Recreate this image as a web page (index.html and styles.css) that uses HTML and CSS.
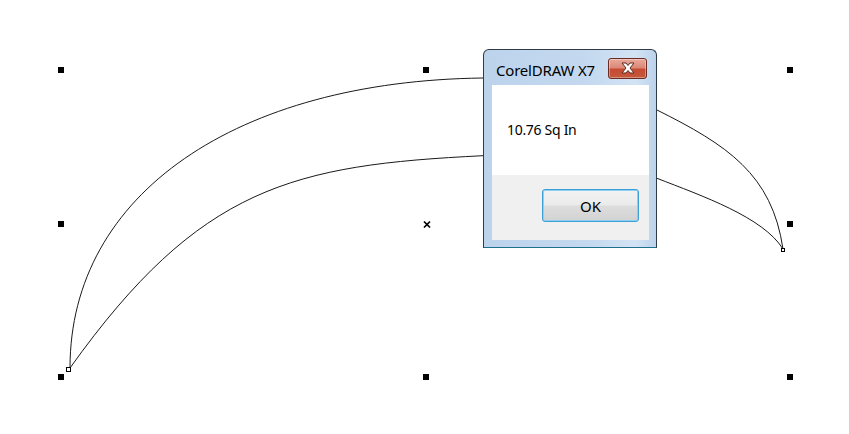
FILE: index.html
```html
<!DOCTYPE html>
<html>
<head>
<meta charset="utf-8">
<link rel="stylesheet" href="styles.css">
</head>
<body>
<div class="stage">
  <svg class="drawing" width="849" height="434" viewBox="0 0 849 434">
    <g fill="none" stroke="#1a1a1a" stroke-width="1">
      <path d="M70,368 C70,193 238,81 483,78"/>
      <path d="M70,368 C200,186 293,165 483,155.7"/>
      <path d="M657,110 C727,145 772,174 783,249"/>
      <path d="M657,178.3 C702,195.9 763,217 783,249"/>
    </g>
    <g fill="#000" shape-rendering="crispEdges">
      <rect x="58" y="67" width="6" height="6"/>
      <rect x="423" y="67" width="6" height="6"/>
      <rect x="787" y="67" width="6" height="6"/>
      <rect x="58" y="221" width="6" height="6"/>
      <rect x="787" y="221" width="6" height="6"/>
      <rect x="58" y="374" width="6" height="6"/>
      <rect x="423" y="374" width="6" height="6"/>
      <rect x="787" y="374" width="6" height="6"/>
    </g>
    <g stroke="#000" stroke-width="1.7">
      <line x1="424" y1="221.5" x2="430" y2="227.5"/>
      <line x1="430" y1="221.5" x2="424" y2="227.5"/>
    </g>
    <g fill="#fff" stroke="#000" stroke-width="1" shape-rendering="crispEdges">
      <rect x="66.5" y="367.5" width="4" height="4"/>
      <rect x="781.5" y="248.5" width="3" height="3"/>
    </g>
  </svg>

  <div class="dialog">
    <div class="titlebar">
      <span class="title">CorelDRAW X7</span>
      <span class="close">
        <svg width="16" height="12" viewBox="0 0 16 12">
          <path d="M2,1 L6,1 L8,3.5 L10,1 L14,1 L10,6 L14,11 L10,11 L8,8.5 L6,11 L2,11 L6,6 Z" fill="#fff" stroke="#5a2a22" stroke-width="1" stroke-linejoin="round"/>
        </svg>
      </span>
    </div>
    <div class="client">
      <div class="message">10.76 Sq In</div>
      <div class="footer">
        <button class="ok">OK</button>
      </div>
    </div>
  </div>
</div>
</body>
</html>
```

FILE: styles.css
```css
html, body {
  margin: 0;
  padding: 0;
  background: #fff;
}

.stage {
  position: relative;
  width: 849px;
  height: 434px;
  overflow: hidden;
}

.drawing {
  display: block;
}

.dialog {
  position: absolute;
  left: 483px;
  top: 49px;
  width: 174px;
  height: 199px;
  box-sizing: border-box;
  border: 1px solid #2f3a44;
  border-bottom-color: #1d6f8c;
  border-radius: 6px 6px 0 0;
  background: linear-gradient(90deg, #bcd3ec 0%, #c4d9ef 60%, #d3e3f4 88%, #bcd3ec 100%);
  display: flex;
  flex-direction: column;
  font-family: "Noto Sans", "Open Sans", sans-serif;
}

.titlebar {
  height: 35px;
  display: flex;
  align-items: center;
  justify-content: space-between;
  padding: 0 9px 0 12px;
}

.title {
  font-size: 15px;
  color: #000;
  letter-spacing: -0.2px;
  padding-top: 4px;
}

.close {
  width: 39px;
  height: 21px;
  box-sizing: border-box;
  margin-top: 1px;
  border: 1px solid #6b2b22;
  border-radius: 3px;
  background: linear-gradient(180deg, #e9a99a 0%, #dc8a78 45%, #c74a33 55%, #c25a3c 100%);
  display: flex;
  align-items: center;
  justify-content: center;
  box-shadow: inset 0 0 0 1px rgba(255,255,255,0.35);
}

.close svg {
  display: block;
}

.client {
  flex: 1;
  margin: 0 7px 7px 8px;
  display: flex;
  flex-direction: column;
  background: #fff;
}

.message {
  height: 90px;
  box-sizing: border-box;
  padding: 35px 0 0 15px;
  font-size: 14px;
  color: #000;
  letter-spacing: -0.3px;
}

.footer {
  flex: 1;
  background: #f0f0f0;
  display: flex;
  justify-content: flex-end;
  align-items: flex-start;
  padding: 14px 10px 0 0;
}

.ok {
  width: 97px;
  height: 33px;
  box-sizing: border-box;
  border: 1px solid #3c9fd6;
  border-radius: 3px;
  box-shadow: inset 0 0 0 1px #8fd0f2;
  background: linear-gradient(180deg, #f2f2f2 0%, #ebebeb 48%, #dddddd 52%, #d2d2d2 100%);
  font-family: "Noto Sans", "Open Sans", sans-serif;
  font-size: 15px;
  color: #000;
  padding: 0;
}
```
